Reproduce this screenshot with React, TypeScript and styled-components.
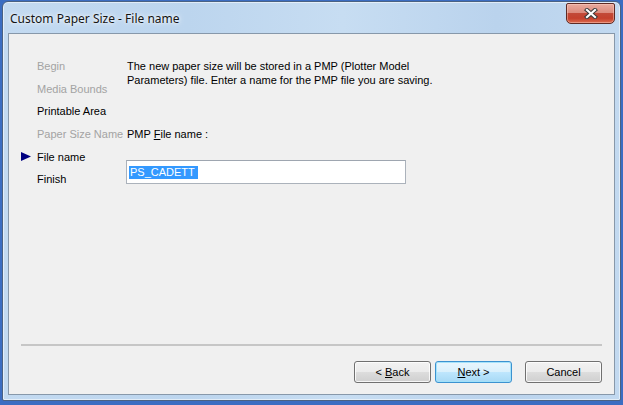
import React from 'react';
import styled, { createGlobalStyle } from 'styled-components';

const Global = createGlobalStyle`
  html, body { margin: 0; padding: 0; background: #3b6dc2; }
  body { width: 623px; height: 405px; overflow: hidden; }
  * { box-sizing: border-box; }
`;

const Screen = styled.div`
  width: 623px;
  height: 405px;
  background: #3b6dc2;
  padding: 1px 2px 4px 2px;
  display: flex;
`;

const Frame = styled.div`
  flex: 1;
  display: flex;
  flex-direction: column;
  border: 1px solid #4a6283;
  border-radius: 6px 6px 2px 2px;
  background: linear-gradient(90deg, #c3daf1 0%, #bcd5ee 30%, #c7ddf2 55%, #bad3ed 80%, #c2d9f0 100%);
  box-shadow: inset 0 0 0 1px rgba(255, 255, 255, 0.55);
`;

const TitleBar = styled.div`
  height: 31px;
  display: flex;
  justify-content: space-between;
  align-items: flex-start;
  padding-left: 7px;
`;

const TitleText = styled.div`
  margin-top: 9px;
  font-family: "Noto Sans", "Open Sans", sans-serif;
  font-size: 12px;
  line-height: 16px;
  color: #141414;
  text-shadow: 0 0 6px #ffffff, 0 0 3px rgba(255, 255, 255, 0.9);
`;

const CloseButton = styled.div`
  width: 49px;
  height: 21px;
  margin: 1px 5px 0 0;
  border: 1px solid #5e2a24;
  border-radius: 2px 2px 5px 5px;
  background: linear-gradient(to bottom, #e9aa9e 0%, #dc8c7e 45%, #c24a38 50%, #c4412d 75%, #dc6a4e 100%);
  box-shadow: inset 0 0 0 1px rgba(255, 210, 200, 0.45);
  display: flex;
  align-items: center;
  justify-content: center;
`;

const Client = styled.div`
  flex: 1;
  margin: 0 5px 5px 5px;
  border: 1px solid #8798aa;
  background: #f0f0f0;
  display: flex;
  flex-direction: column;
  font-family: "Liberation Sans", Arial, sans-serif;
  font-size: 11px;
  color: #000;
`;

const Main = styled.div`
  flex: 1;
  display: grid;
  grid-template-columns: 118px 1fr;
  padding-top: 21px;
`;

const Nav = styled.div`
  display: flex;
  flex-direction: column;
  padding-left: 12px;
`;

const NavRow = styled.div<{ $enabled: boolean }>`
  height: 22.6px;
  display: flex;
  align-items: center;
  color: ${(p) => (p.$enabled ? '#000000' : '#a3a3a3')};
  white-space: nowrap;
`;

const ArrowSlot = styled.div`
  width: 16px;
  height: 22px;
  display: flex;
  align-items: center;
`;

const Content = styled.div`
  display: flex;
  flex-direction: column;
  align-items: flex-start;
`;

const Paragraph = styled.p`
  margin: 4px 0 0 0;
  line-height: 14px;
  width: 340px;
`;

const FieldLabel = styled.div`
  margin-top: 40px;
  line-height: 14px;
`;

const TextBox = styled.div`
  margin-top: 19px;
  margin-left: -1px;
  width: 280px;
  height: 24px;
  border: 1px solid #abb2bb;
  border-top-color: #9ea6b0;
  background: #ffffff;
  display: flex;
  align-items: center;
  padding-left: 2px;
`;

const Selection = styled.span`
  background: #3399ff;
  color: #ffffff;
  line-height: 13px;
  padding: 0 3px 0 1px;
`;

const Separator = styled.div`
  height: 2px;
  margin: 0 12px;
  background: #c6c6c6;
`;

const ButtonRow = styled.div`
  display: flex;
  justify-content: flex-end;
  padding: 15px 12px 11px 0;
`;

const Button = styled.div<{ $primary?: boolean; $gap?: number }>`
  width: 77px;
  height: 22px;
  margin-left: ${(p) => p.$gap ?? 0}px;
  border: 1px solid ${(p) => (p.$primary ? '#3c92d0' : '#707070')};
  border-radius: 3px;
  background: ${(p) =>
    p.$primary
      ? 'linear-gradient(to bottom, #eaf6fd 0%, #d9f0fc 50%, #bee6fd 51%, #a7d9f5 100%)'
      : 'linear-gradient(to bottom, #f2f2f2 0%, #ebebeb 50%, #dddddd 51%, #cfcfcf 100%)'};
  box-shadow: inset 0 0 0 1px ${(p) => (p.$primary ? 'rgba(160, 225, 250, 0.9)' : 'rgba(255, 255, 255, 0.8)')};
  display: flex;
  align-items: center;
  justify-content: center;
  line-height: 13px;
`;

const U = styled.span`
  text-decoration: underline;
`;

const navItems: { label: string; enabled: boolean; current?: boolean }[] = [
  { label: 'Begin', enabled: false },
  { label: 'Media Bounds', enabled: false },
  { label: 'Printable Area', enabled: true },
  { label: 'Paper Size Name', enabled: false },
  { label: 'File name', enabled: true, current: true },
  { label: 'Finish', enabled: true },
];

export default function App() {
  return (
    <>
      <Global />
      <Screen>
        <Frame>
          <TitleBar>
            <TitleText>Custom Paper Size - File name</TitleText>
            <CloseButton>
              <svg width="14" height="11" viewBox="0 0 14 11">
                <path d="M3 2 L11 9 M11 2 L3 9" stroke="#3b3b3b" strokeWidth="4.2" strokeLinecap="square" />
                <path d="M3 2 L11 9 M11 2 L3 9" stroke="#ffffff" strokeWidth="2.2" strokeLinecap="square" />
              </svg>
            </CloseButton>
          </TitleBar>
          <Client>
            <Main>
              <Nav>
                {navItems.map((item) => (
                  <NavRow key={item.label} $enabled={item.enabled}>
                    <ArrowSlot>
                      {item.current && (
                        <svg width="10" height="9" viewBox="0 0 10 9">
                          <path d="M0 0 L10 4.5 L0 9 Z" fill="#000080" />
                        </svg>
                      )}
                    </ArrowSlot>
                    {item.label}
                  </NavRow>
                ))}
              </Nav>
              <Content>
                <Paragraph>
                  The new paper size will be stored in a PMP (Plotter Model Parameters) file. Enter a name for the PMP file you are saving.
                </Paragraph>
                <FieldLabel>
                  PMP <U>F</U>ile name :
                </FieldLabel>
                <TextBox>
                  <Selection>PS_CADETT</Selection>
                </TextBox>
              </Content>
            </Main>
            <Separator />
            <ButtonRow>
              <Button>
                &lt;&nbsp;<U>B</U>ack
              </Button>
              <Button $primary $gap={4}>
                <U>N</U>ext &gt;
              </Button>
              <Button $gap={13}>Cancel</Button>
            </ButtonRow>
          </Client>
        </Frame>
      </Screen>
    </>
  );
}
